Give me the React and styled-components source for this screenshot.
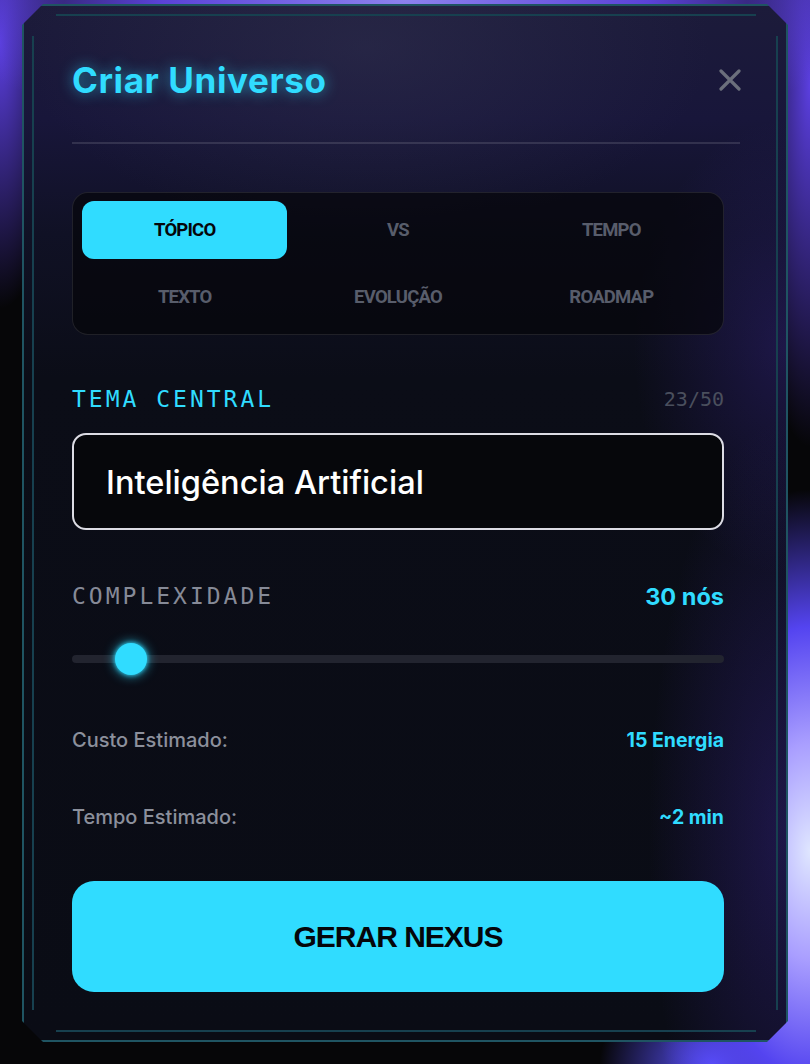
import React, { useState } from "react";
import styled, { createGlobalStyle } from "styled-components";

const CYAN = "#30dcff";
const GROTESK = `"Inter", "Noto Sans", sans-serif`;
const MONO = `"DejaVu Sans Mono", "Liberation Mono", monospace`;
const TAB_FONT = `"Roboto", "Liberation Sans", Arial, sans-serif`;

const Global = createGlobalStyle`
  html, body { margin: 0; padding: 0; }
  body {
    min-height: 1064px;
    background:
      radial-gradient(ellipse 22% 34% at 100% 80%, #dfe6ff 0%, #a99eff 30%, #5444f0 62%, rgba(40,30,160,0) 100%),
      radial-gradient(ellipse 14% 8% at 88% 100%, #5a52ff 0%, rgba(60,50,230,0) 100%),
      radial-gradient(ellipse 60% 14% at 50% 0%, #8d82ee 0%, #5b42d8 50%, rgba(70,40,200,0) 100%),
      radial-gradient(ellipse 8% 25% at 0% 4%, #5b3fe0 0%, rgba(60,40,200,0) 100%),
      radial-gradient(ellipse 8% 34% at 100% 8%, #5b3fe0 0%, rgba(60,40,200,0) 100%),
      #060608;
  }
`;

const Page = styled.div`
  padding: 4px 22px 22px;
`;

const Panel = styled.section`
  position: relative;
  box-sizing: border-box;
  height: 1038px;
  border: 2px solid #1f5462;
  clip-path: polygon(21px 0, calc(100% - 21px) 0, 100% 21px, 100% calc(100% - 21px), calc(100% - 21px) 100%, 21px 100%, 0 calc(100% - 21px), 0 21px);
  background:
    radial-gradient(ellipse 45% 18% at 45% 4%, rgba(60,60,90,0.35) 0%, rgba(60,60,90,0) 100%),
    radial-gradient(ellipse 18% 40% at 100% 80%, rgba(74,46,190,0.3) 0%, rgba(74,46,190,0) 100%),
    radial-gradient(ellipse 20% 22% at 100% 33%, rgba(74,46,190,0.28) 0%, rgba(74,46,190,0) 100%),
    linear-gradient(180deg, #1c1b3a 0%, #18163a 11%, #101125 22%, #0b0d17 36%, #0a0c15 100%);
  padding: 54px 46px 47px 48px;
  display: flex;
  flex-direction: column;

  /* corner frame: short inner rails along each edge */
  &::before {
    content: "";
    position: absolute;
    top: 8px;
    bottom: 8px;
    left: 32px;
    right: 30px;
    border-top: 2px solid #17404f;
    border-bottom: 2px solid #17404f;
    pointer-events: none;
  }
  &::after {
    content: "";
    position: absolute;
    top: 30px;
    bottom: 30px;
    left: 8px;
    right: 8px;
    border-left: 2px solid #17404f;
    border-right: 2px solid #17404f;
    pointer-events: none;
  }
`;

const Header = styled.header`
  display: flex;
  align-items: center;
  justify-content: space-between;
  height: 40px;
`;

const Title = styled.h2`
  margin: 0;
  font-family: ${GROTESK};
  font-weight: 700;
  font-size: 35px;
  letter-spacing: 0.6px;
  color: ${CYAN};
  text-shadow: 0 0 14px rgba(48, 220, 255, 0.6);
`;

const CloseButton = styled.button`
  display: flex;
  align-items: center;
  justify-content: center;
  width: 24px;
  height: 24px;
  padding: 0;
  margin-right: -2px;
  background: none;
  border: none;
  color: #6b6f7c;
  cursor: pointer;
`;

const Divider = styled.hr`
  margin: 42px 0 0;
  border: none;
  height: 2px;
  background: rgba(255, 255, 255, 0.12);
`;

const Body = styled.div`
  display: flex;
  flex-direction: column;
  padding-right: 16px;
`;

const ModeGrid = styled.div`
  margin-top: 48px;
  display: grid;
  grid-template-columns: repeat(3, 1fr);
  grid-auto-rows: 58px;
  gap: 9px 8px;
  padding: 8px 9px;
  border: 1px solid rgba(255, 255, 255, 0.1);
  border-radius: 16px;
  background: rgba(5, 6, 10, 0.7);
`;

const ModeTab = styled.button`
  border: none;
  border-radius: 12px;
  cursor: pointer;
  font-family: ${TAB_FONT};
  font-weight: 700;
  font-size: 18.5px;
  letter-spacing: -0.8px;
  color: ${(p) => (p.$active ? "#05060a" : "#585d6b")};
  background: ${(p) => (p.$active ? CYAN : "transparent")};
`;

const FieldHead = styled.div`
  display: flex;
  align-items: center;
  justify-content: space-between;
  height: 28px;
  margin-top: ${(p) => p.$gap}px;
`;

const FieldLabel = styled.span`
  font-family: ${MONO};
  font-size: 23px;
  letter-spacing: 3px;
  color: ${(p) => (p.$accent ? CYAN : "#868a97")};
`;

const Counter = styled.span`
  font-family: ${MONO};
  font-size: 20px;
  color: #4a4f5d;
`;

const NodeCount = styled.span`
  font-family: ${GROTESK};
  font-weight: 700;
  font-size: 23.5px;
  color: ${CYAN};
`;

const TopicInput = styled.input`
  box-sizing: border-box;
  margin-top: 20px;
  height: 97px;
  width: 100%;
  padding: 0 32px;
  border: 2px solid #dcdce4;
  border-radius: 14px;
  background: #06070b;
  color: #ffffff;
  font-family: ${GROTESK};
  font-weight: 500;
  font-size: 32.6px;
  outline: none;
`;

const SliderArea = styled.div`
  position: relative;
  margin-top: 33px;
  height: 32px;
  display: flex;
  align-items: center;
`;

const Track = styled.div`
  flex: 1;
  height: 8px;
  border-radius: 4px;
  background: #22242f;
`;

const Thumb = styled.div`
  position: absolute;
  top: 0;
  width: 32px;
  height: 32px;
  border-radius: 50%;
  background: ${CYAN};
  box-shadow: 0 0 12px rgba(48, 220, 255, 0.85), 0 0 4px rgba(48, 220, 255, 0.9);
`;

const InfoRow = styled.div`
  display: flex;
  align-items: center;
  justify-content: space-between;
  height: 24px;
  margin-top: 53px;
`;

const InfoLabel = styled.span`
  font-family: ${GROTESK};
  font-weight: 500;
  font-size: 20px;
  color: #8c909c;
`;

const InfoValue = styled.span`
  font-family: ${GROTESK};
  font-weight: 700;
  font-size: 19.5px;
  color: ${CYAN};
`;

const GenerateButton = styled.button`
  margin-top: 52px;
  height: 111px;
  border: none;
  border-radius: 22px;
  background: ${CYAN};
  color: #05060a;
  font-family: "Liberation Sans", Arial, sans-serif;
  font-weight: 700;
  font-size: 30px;
  letter-spacing: -1px;
  cursor: pointer;
`;

const MODES = ["TÓPICO", "VS", "TEMPO", "TEXTO", "EVOLUÇÃO", "ROADMAP"];
const MIN_NODES = 10;
const MAX_NODES = 300;

function CloseIcon() {
  return (
    <svg width="22" height="22" viewBox="0 0 22 22" fill="none">
      <path d="M2 2 L20 20 M20 2 L2 20" stroke="currentColor" strokeWidth="3.2" strokeLinecap="round" />
    </svg>
  );
}

export default function App() {
  const [mode, setMode] = useState("TÓPICO");
  const [topic, setTopic] = useState("Inteligência Artificial");
  const nodes = 30;
  const pct = (nodes - MIN_NODES) / (MAX_NODES - MIN_NODES);

  return (
    <Page>
      <Global />
      <Panel>
        <Header>
          <Title>Criar Universo</Title>
          <CloseButton aria-label="Fechar">
            <CloseIcon />
          </CloseButton>
        </Header>
        <Divider />
        <Body>
          <ModeGrid>
            {MODES.map((m) => (
              <ModeTab key={m} $active={m === mode} onClick={() => setMode(m)}>
                {m}
              </ModeTab>
            ))}
          </ModeGrid>

          <FieldHead $gap={50}>
            <FieldLabel $accent>TEMA CENTRAL</FieldLabel>
            <Counter>{topic.length}/50</Counter>
          </FieldHead>
          <TopicInput value={topic} maxLength={50} onChange={(e) => setTopic(e.target.value)} />

          <FieldHead $gap={52}>
            <FieldLabel>COMPLEXIDADE</FieldLabel>
            <NodeCount>{nodes} nós</NodeCount>
          </FieldHead>
          <SliderArea>
            <Track />
            <Thumb style={{ left: `calc(${pct} * (100% - 32px))` }} />
          </SliderArea>

          <InfoRow>
            <InfoLabel>Custo Estimado:</InfoLabel>
            <InfoValue>15 Energia</InfoValue>
          </InfoRow>
          <InfoRow>
            <InfoLabel>Tempo Estimado:</InfoLabel>
            <InfoValue>~2 min</InfoValue>
          </InfoRow>

          <GenerateButton>GERAR NEXUS</GenerateButton>
        </Body>
      </Panel>
    </Page>
  );
}
